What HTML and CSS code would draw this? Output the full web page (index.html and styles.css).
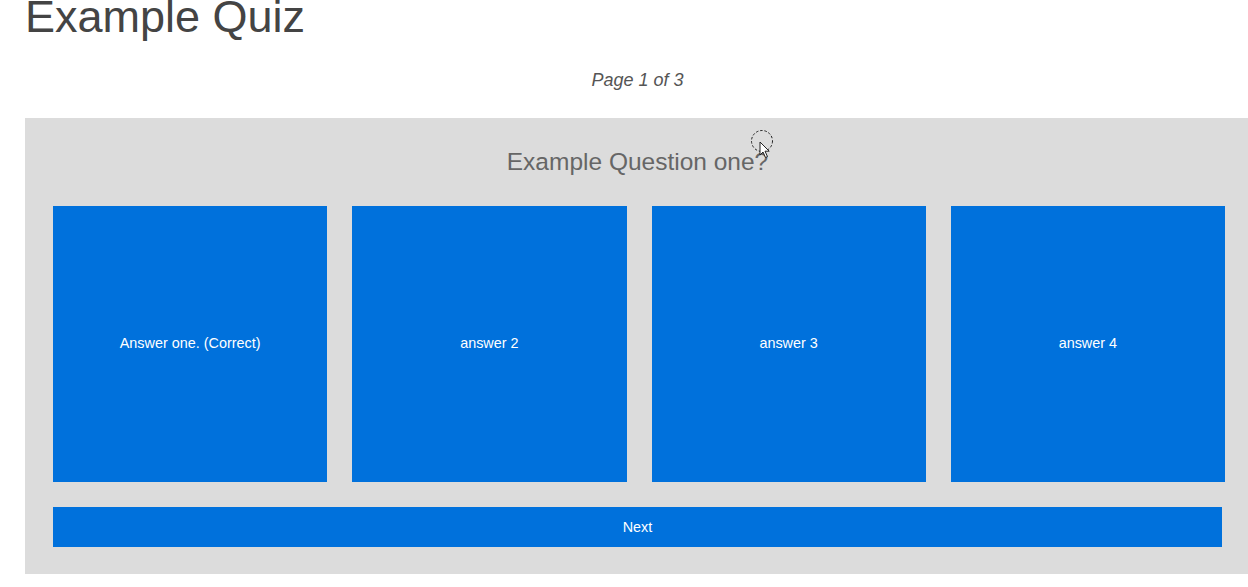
FILE: index.html
```html
<!DOCTYPE html>
<html lang="en">
<head>
<meta charset="utf-8">
<title>Example Quiz</title>
<link rel="stylesheet" href="styles.css">
</head>
<body>
<div class="quiz">
  <h1 class="quiz-title">Example Quiz</h1>
  <p class="quiz-page">Page 1 of 3</p>
  <section class="question-card">
    <h2 class="question-text">Example Question one?</h2>
    <div class="answers">
      <button class="answer">Answer one. (Correct)</button>
      <button class="answer">answer 2</button>
      <button class="answer">answer 3</button>
      <button class="answer">answer 4</button>
    </div>
    <button class="next-btn">Next</button>
  </section>
</div>
<svg class="cursor" width="26" height="32" viewBox="0 0 26 32" aria-hidden="true">
  <circle cx="11" cy="11" r="10.5" fill="none" stroke="#222" stroke-width="1" stroke-dasharray="2.5 1.8"/>
  <path d="M9 12 L9 25 L12 22 L14.5 27.5 L16.5 26.6 L14 21.2 L18.2 21.2 Z" fill="#fff" stroke="#222" stroke-width="1" stroke-linejoin="round"/>
</svg>
</body>
</html>
```

FILE: styles.css
```css
html {
  overflow: hidden;
}

body {
  margin: 0;
  background: #ffffff;
  font-family: "Liberation Sans", Arial, sans-serif;
}

.quiz {
  margin-left: 25px;
  width: 1225px;
}

.quiz-title {
  margin: -5px 0 0 0;
  font-size: 45px;
  line-height: 44px;
  font-weight: normal;
  color: #444444;
}

.quiz-page {
  margin: 31px 0 0 0;
  font-size: 18px;
  line-height: 20px;
  font-style: italic;
  text-align: center;
  color: #555555;
}

.question-card {
  margin-top: 28px;
  box-sizing: border-box;
  padding: 30px 28px 27px 28px;
  background: #dcdcdc;
}

.question-text {
  margin: 0 0 30px 0;
  font-size: 24.5px;
  line-height: 28px;
  font-weight: normal;
  text-align: center;
  color: #666666;
}

.answers {
  display: grid;
  grid-template-columns: repeat(4, 1fr);
  column-gap: 25px;
  margin-right: -3px;
  margin-bottom: 25px;
}

.answer {
  height: 276px;
  border: 0;
  padding: 0 0 3px 0;
  background: #0071dc;
  color: #ffffff;
  font-family: "Liberation Sans", Arial, sans-serif;
  font-size: 14.4px;
  cursor: pointer;
}

.next-btn {
  display: block;
  width: 100%;
  height: 40px;
  border: 0;
  padding: 0;
  background: #0071dc;
  color: #ffffff;
  font-family: "Liberation Sans", Arial, sans-serif;
  font-size: 14.4px;
  cursor: pointer;
}

.cursor {
  position: absolute;
  left: 751px;
  top: 130px;
  pointer-events: none;
}
```
